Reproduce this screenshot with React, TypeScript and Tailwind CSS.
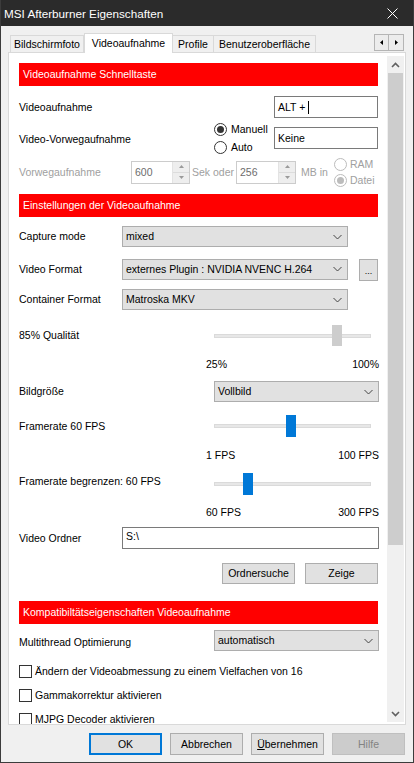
import React from "react";

const Chevron = () => (
  <svg width="9" height="5" viewBox="0 0 9 5" className="absolute right-[5px] top-1/2 -translate-y-1/2">
    <path d="M0.5 0.5L4.5 4.5L8.5 0.5" fill="none" stroke="#444" strokeWidth="1" />
  </svg>
);

function Select({ text, className }: { text: string; className: string }) {
  return (
    <div className={`relative h-[21px] bg-[#e1e1e1] border border-[#adadad] flex items-center pl-[3px] shrink-0 ${className}`}>
      <span className="whitespace-nowrap">{text}</span>
      <Chevron />
    </div>
  );
}

function Header({ text }: { text: string }) {
  return (
    <div className="h-[23px] w-[359px] shrink-0 bg-[#ff0000] text-white flex items-center pl-[4px] whitespace-nowrap">
      {text}
    </div>
  );
}

function Radio({ checked, disabled }: { checked?: boolean; disabled?: boolean }) {
  return (
    <span
      className={`w-[13px] h-[13px] rounded-full border flex items-center justify-center shrink-0 ${
        disabled ? "border-[#bcbcbc] bg-white" : "border-[#333333] bg-white"
      }`}
    >
      {checked && (
        <span className={`w-[7px] h-[7px] rounded-full ${disabled ? "bg-[#bcbcbc]" : "bg-[#333333]"}`} />
      )}
    </span>
  );
}

function Spin({ value, className }: { value: string; className: string }) {
  return (
    <div className={`h-[23px] border border-[#cccccc] bg-white flex shrink-0 ${className}`}>
      <span className="pl-[3px] flex items-center text-[#6d6d6d]">{value}</span>
      <div className="ml-auto w-[17px] flex flex-col border-l border-[#e3e3e3]">
        <div className="flex-1 bg-[#eeeeee] border-b border-[#dcdcdc] flex items-center justify-center">
          <svg width="5" height="3" viewBox="0 0 5 3">
            <path d="M0 3L2.5 0L5 3Z" fill="#9a9a9a" />
          </svg>
        </div>
        <div className="flex-1 bg-[#eeeeee] flex items-center justify-center">
          <svg width="5" height="3" viewBox="0 0 5 3">
            <path d="M0 0L2.5 3L5 0Z" fill="#9a9a9a" />
          </svg>
        </div>
      </div>
    </div>
  );
}

function Checkbox({ label, className }: { label: string; className: string }) {
  return (
    <div className={`h-[16px] flex items-center shrink-0 ${className}`}>
      <span className="w-[13px] h-[13px] border border-[#333333] bg-white shrink-0" />
      <span className="ml-[3px] whitespace-nowrap">{label}</span>
    </div>
  );
}

function Btn({ text, className }: { text: React.ReactNode; className: string }) {
  return (
    <div className={`w-[73px] h-[21px] bg-[#e1e1e1] border border-[#adadad] flex items-center justify-center shrink-0 ${className}`}>
      {text}
    </div>
  );
}

export default function App() {
  return (
    <div className="w-[414px] h-[763px] bg-[#f0f0f0] flex flex-col border-x border-b border-[#3c3c3c] overflow-hidden text-[10.5px] text-black font-['Liberation_Sans',Arial,sans-serif] leading-[13px]">
      {/* Title bar */}
      <div className="h-[26px] shrink-0 bg-[#2b2b2b] flex items-center pl-[3px] text-white text-[11.7px]">
        <span>MSI Afterburner Eigenschaften</span>
        <svg width="11" height="11" viewBox="0 0 11 11" className="ml-auto mr-[15px]">
          <path d="M0.5 0.5L10.5 10.5M10.5 0.5L0.5 10.5" stroke="#ffffff" strokeWidth="1" />
        </svg>
      </div>

      {/* Tabs */}
      <div className="h-[26px] shrink-0 flex items-end pl-[9px]">
        <div className="h-[17px] w-[74px] border border-b-0 border-[#d9d9d9] bg-[#f0f0f0] flex items-center justify-center">
          Bildschirmfoto
        </div>
        <div className="h-[20px] w-[89px] -mb-px relative z-10 border border-b-0 border-[#d9d9d9] bg-white flex items-center justify-center pb-[1px]">
          Videoaufnahme
        </div>
        <div className="h-[17px] w-[41px] border border-l-0 border-b-0 border-[#d9d9d9] bg-[#f0f0f0] flex items-center justify-center">
          Profile
        </div>
        <div className="h-[17px] w-[102px] border border-l-0 border-b-0 border-[#d9d9d9] bg-[#f0f0f0] flex items-center justify-center">
          Benutzeroberfläche
        </div>
        <div className="ml-auto mr-[9px] mb-[1px] flex">
          <div className="w-[15px] h-[17px] border border-[#b5b5b5] bg-[#ececec] flex items-center justify-center">
            <svg width="3" height="5" viewBox="0 0 3 5">
              <path d="M3 0L0 2.5L3 5Z" fill="#000" />
            </svg>
          </div>
          <div className="w-[15px] h-[17px] border border-l-0 border-[#b5b5b5] bg-[#ececec] flex items-center justify-center">
            <svg width="3" height="5" viewBox="0 0 3 5">
              <path d="M0 0L3 2.5L0 5Z" fill="#000" />
            </svg>
          </div>
        </div>
      </div>

      {/* Panel */}
      <div className="ml-[7px] w-[398px] h-[673px] shrink-0 border border-[#d9d9d9] bg-white flex">
        <div className="w-[378px] h-full overflow-hidden pl-[10px] flex flex-col">
          <div className="mt-[10px]">
            <Header text="Videoaufnahme Schnelltaste" />
          </div>

          <div className="mt-[10px] h-[22px] flex items-center shrink-0">
            <div className="w-[255px] shrink-0">Videoaufnahme</div>
            <div className="w-[104px] h-[22px] border border-[#7a7a7a] flex items-center pl-[3px]">
              <span className="whitespace-pre">ALT + </span>
              <span className="w-px h-[13px] bg-black" />
            </div>
          </div>

          <div className="mt-[2px] h-[36px] flex items-center shrink-0">
            <div className="w-[195px] shrink-0 pt-[3px]">Video-Vorwegaufnahme</div>
            <div className="w-[60px] shrink-0 flex flex-col">
              <div className="h-[18px] flex items-center gap-[4px]">
                <Radio checked />
                <span>Manuell</span>
              </div>
              <div className="h-[18px] flex items-center gap-[4px]">
                <Radio />
                <span>Auto</span>
              </div>
            </div>
            <div className="w-[104px] h-[22px] border border-[#7a7a7a] flex items-center pl-[3px]">Keine</div>
          </div>

          <div className="h-[32px] flex items-center shrink-0 text-[#a0a0a0]">
            <div className="w-[112px] shrink-0">Vorwegaufnahme</div>
            <Spin value="600" className="w-[59px]" />
            <div className="w-[46px] shrink-0 pl-[2px] whitespace-nowrap">Sek oder</div>
            <Spin value="256" className="w-[60px]" />
            <div className="ml-[5px] w-[33px] shrink-0 whitespace-nowrap">MB in</div>
            <div className="flex flex-col">
              <div className="h-[16px] flex items-center gap-[3px]">
                <Radio disabled />
                <span>RAM</span>
              </div>
              <div className="h-[16px] flex items-center gap-[3px]">
                <Radio disabled checked />
                <span>Datei</span>
              </div>
            </div>
          </div>

          <div className="mt-[6px]">
            <Header text="Einstellungen der Videoaufnahme" />
          </div>

          <div className="mt-[9px] h-[21px] flex items-center shrink-0">
            <div className="w-[103px] shrink-0">Capture mode</div>
            <Select text="mixed" className="w-[226px]" />
          </div>

          <div className="mt-[11px] h-[22px] flex items-center shrink-0">
            <div className="w-[103px] shrink-0">Video Format</div>
            <Select text="externes Plugin : NVIDIA NVENC H.264" className="w-[226px]" />
            <div className="ml-[11px] w-[19px] h-[22px] mt-[1px] bg-[#e1e1e1] border border-[#adadad] flex items-end justify-center pb-[4px] text-[9px] leading-none">
              ...
            </div>
          </div>

          <div className="mt-[9px] h-[21px] flex items-center shrink-0">
            <div className="w-[103px] shrink-0">Container Format</div>
            <Select text="Matroska MKV" className="w-[226px]" />
          </div>

          <div className="mt-[15px] h-[21px] flex items-center shrink-0">
            <div className="w-[195px] shrink-0">85% Qualität</div>
            <div className="relative w-[157px] h-[21px]">
              <div className="absolute left-0 right-0 top-[9px] h-[4px] bg-[#e7e7e7] border border-[#dadada]" />
              <div className="absolute top-0 left-[118px] w-[10px] h-[21px] bg-[#cdcdcd]" />
            </div>
          </div>

          <div className="mt-[11px] h-[14px] ml-[187px] w-[173px] flex items-center justify-between shrink-0">
            <span>25%</span>
            <span>100%</span>
          </div>

          <div className="mt-[10px] h-[21px] flex items-center shrink-0">
            <div className="w-[195px] shrink-0">Bildgröße</div>
            <Select text="Vollbild" className="w-[165px]" />
          </div>

          <div className="mt-[13px] h-[22px] flex items-center shrink-0">
            <div className="w-[195px] shrink-0">Framerate 60 FPS</div>
            <div className="relative w-[157px] h-[22px]">
              <div className="absolute left-0 right-0 top-[9px] h-[4px] bg-[#e7e7e7] border border-[#dadada]" />
              <div className="absolute top-0 left-[72px] w-[10px] h-[22px] bg-[#0078d7]" />
            </div>
          </div>

          <div className="mt-[11px] h-[14px] ml-[187px] w-[173px] flex items-center justify-between shrink-0">
            <span>1 FPS</span>
            <span>100 FPS</span>
          </div>

          <div className="mt-[11px] h-[22px] flex items-center shrink-0">
            <div className="w-[195px] shrink-0 pb-[6px]">Framerate begrenzen: 60 FPS</div>
            <div className="relative w-[157px] h-[22px]">
              <div className="absolute left-0 right-0 top-[9px] h-[4px] bg-[#e7e7e7] border border-[#dadada]" />
              <div className="absolute top-0 left-[29px] w-[10px] h-[22px] bg-[#0078d7]" />
            </div>
          </div>

          <div className="mt-[10px] h-[14px] ml-[187px] w-[173px] flex items-center justify-between shrink-0">
            <span>60 FPS</span>
            <span>300 FPS</span>
          </div>

          <div className="mt-[8px] h-[22px] flex items-center shrink-0">
            <div className="w-[103px] shrink-0">Video Ordner</div>
            <div className="w-[257px] h-[22px] border border-[#7a7a7a] flex items-center pl-[3px] pb-[3px]">S:\</div>
          </div>

          <div className="mt-[14px] h-[21px] flex items-center shrink-0 ml-[203px] gap-[10px]">
            <Btn text="Ordnersuche" className="" />
            <Btn text="Zeige" className="" />
          </div>

          <div className="mt-[17px]">
            <Header text="Kompatibiltätseigenschaften Videoaufnahme" />
          </div>

          <div className="mt-[6px] h-[21px] flex items-center shrink-0">
            <div className="w-[195px] shrink-0 pt-[3px]">Multithread Optimierung</div>
            <Select text="automatisch" className="w-[165px]" />
          </div>

          <Checkbox label="Ändern der Videoabmessung zu einem Vielfachen von 16" className="mt-[12px]" />
          <Checkbox label="Gammakorrektur aktivieren" className="mt-[8px]" />
          <Checkbox label="MJPG Decoder aktivieren" className="mt-[8px]" />
        </div>

        {/* Scrollbar */}
        <div className="w-[17px] mt-[3px] mb-[2px] bg-[#f0f0f0] flex flex-col">
          <div className="h-[17px] flex items-center justify-center">
            <svg width="9" height="6" viewBox="0 0 9 6">
              <path d="M1 5L4.5 1.5L8 5" fill="none" stroke="#606060" strokeWidth="1.6" />
            </svg>
          </div>
          <div className="flex-1 relative">
            <div className="absolute left-[1px] right-[1px] top-0 h-[472px] bg-[#cdcdcd]" />
          </div>
          <div className="h-[17px] flex items-center justify-center">
            <svg width="9" height="6" viewBox="0 0 9 6">
              <path d="M1 1L4.5 4.5L8 1" fill="none" stroke="#606060" strokeWidth="1.6" />
            </svg>
          </div>
        </div>
      </div>

      {/* Bottom buttons */}
      <div className="mt-[8px] h-[22px] shrink-0 flex justify-end pr-[8px] gap-[8px]">
        <div className="w-[73px] h-[22px] bg-[#e1e1e1] border border-[#0078d7] shadow-[inset_0_0_0_1px_#0078d7] flex items-center justify-center">
          OK
        </div>
        <div className="w-[73px] h-[22px] bg-[#e1e1e1] border border-[#adadad] flex items-center justify-center">
          Abbrechen
        </div>
        <div className="w-[73px] h-[22px] bg-[#e1e1e1] border border-[#adadad] flex items-center justify-center">
          <span>
            <span className="underline">Ü</span>bernehmen
          </span>
        </div>
        <div className="w-[73px] h-[22px] bg-[#cccccc] border border-[#bfbfbf] text-[#838383] flex items-center justify-center">
          Hilfe
        </div>
      </div>
    </div>
  );
}
